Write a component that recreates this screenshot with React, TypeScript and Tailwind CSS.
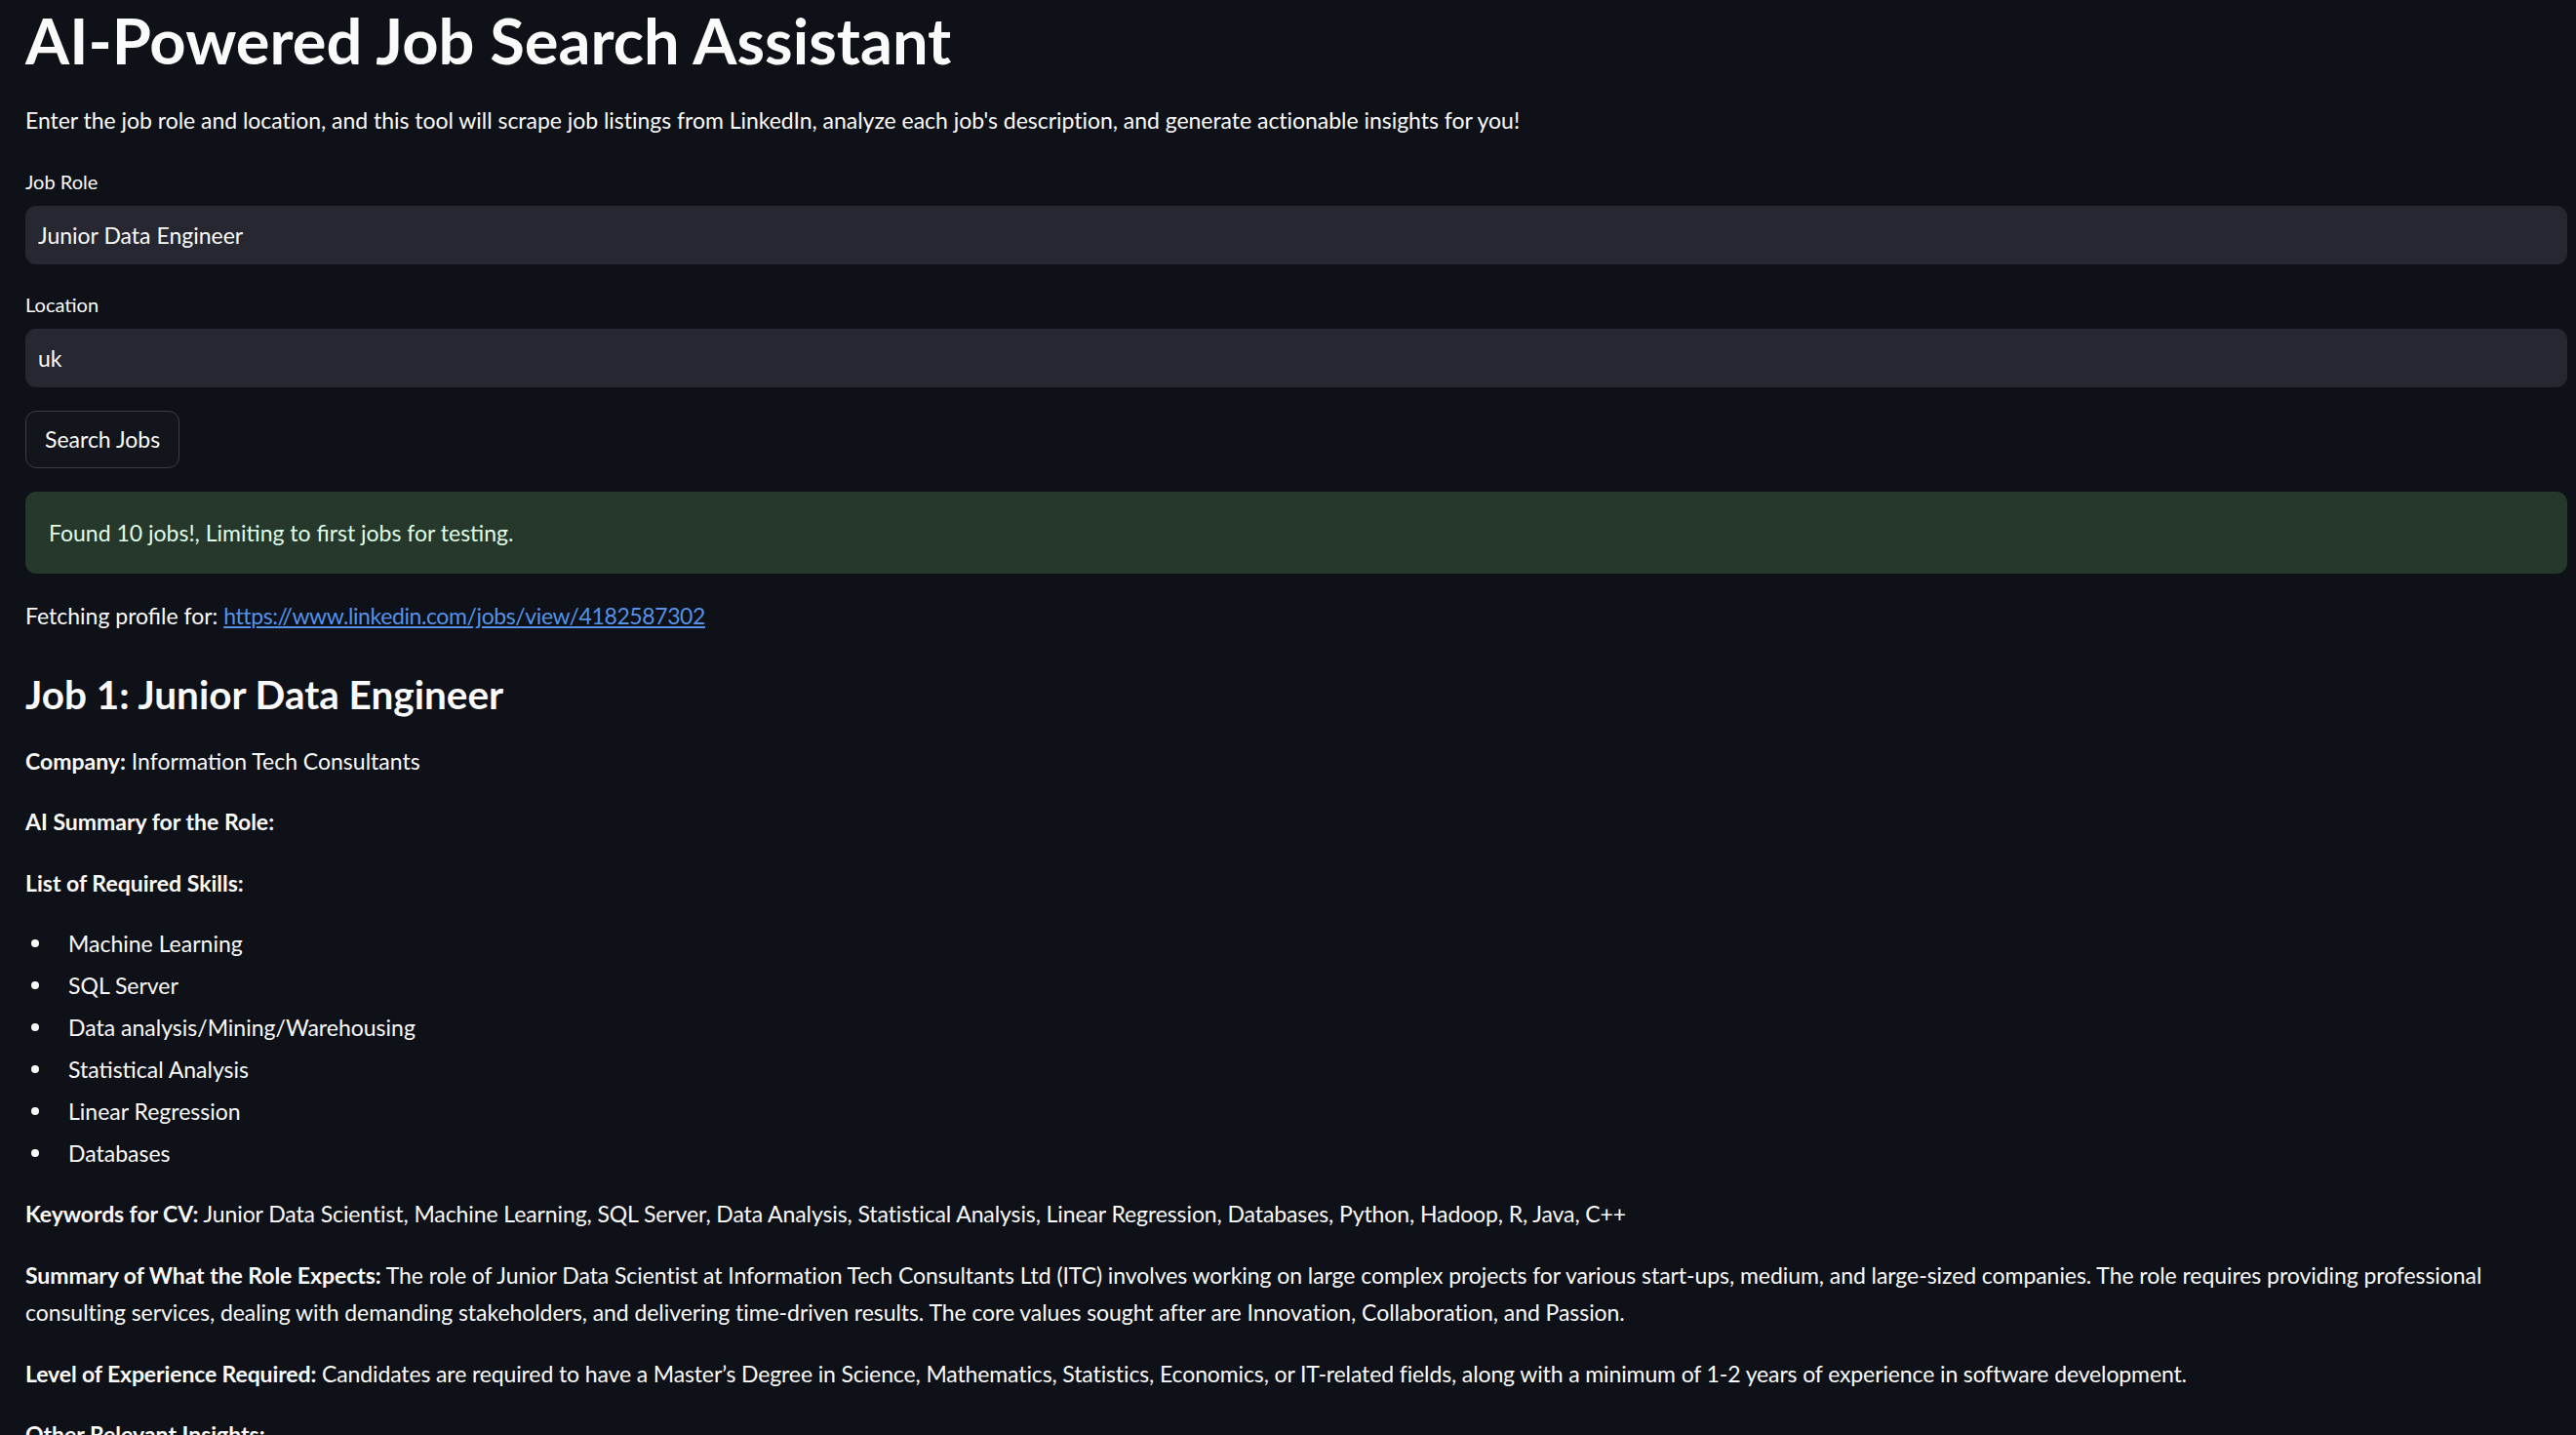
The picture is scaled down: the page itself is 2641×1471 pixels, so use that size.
import React from 'react';

const SKILLS = [
  'Machine Learning',
  'SQL Server',
  'Data analysis/Mining/Warehousing',
  'Statistical Analysis',
  'Linear Regression',
  'Databases',
];

const TextField: React.FC<{ label: string; value: string; first?: boolean }> = ({ label, value, first }) => (
  <>
    <label className={`${first ? 'mt-[29px]' : 'mt-[26px]'} block text-[20px] leading-[30px]`}>{label}</label>
    <div className="mt-[10px] flex h-[60px] items-center rounded-[11px] bg-[#262730] px-[13px]">
      <input
        readOnly
        value={value}
        className="w-full bg-transparent text-[23px] leading-[27.6px] text-[#fafafa] outline-none"
      />
    </div>
  </>
);

export default function App() {
  return (
    <div className="h-screen overflow-hidden bg-[#0e1117] pl-[26px] pr-[9px] font-['Lato',sans-serif] text-[#fafafa]">
      <div className="flex flex-col">
        <h1 className="pt-[2px] text-[65px] font-bold leading-[78px]">AI-Powered Job Search Assistant</h1>
        <p className="mt-[24px] text-[23px] leading-[38.4px] tracking-[-0.03px]">
          Enter the job role and location, and this tool will scrape job listings from LinkedIn, analyze each job's
          description, and generate actionable insights for you!
        </p>

        <TextField label="Job Role" value="Junior Data Engineer" first />
        <TextField label="Location" value="uk" />

        <div className="mt-[24px]">
          <button className="flex h-[59px] items-center rounded-[11px] border border-[#3b3d44] bg-[#12151c] px-[19px] text-[23px] leading-[27.6px]">
            Search Jobs
          </button>
        </div>

        <div className="mt-[24px] flex h-[84px] items-center rounded-[11px] bg-[#26382b] px-[24px] text-[23px] leading-[27.6px] text-[#dffde9]">
          Found 10 jobs!, Limiting to first jobs for testing.
        </div>

        <p className="mt-[24px] text-[23px] leading-[38.4px]">
          Fetching profile for:{' '}
          <a href="#" className="tracking-[-0.4px] text-[#5592e8] underline">
            https://www.linkedin.com/jobs/view/4182587302
          </a>
        </p>

        <h3 className="mt-[37.5px] text-[40.5px] font-bold leading-[48px]">Job 1: Junior Data Engineer</h3>

        <div className="mt-[24.4px] text-[23px] leading-[38.4px]">
          <p className="mb-[24px]">
            <b>Company:</b> Information Tech Consultants
          </p>
          <p className="mb-[24px]">
            <b>AI Summary for the Role:</b>
          </p>
          <p className="mb-[24px]">
            <b>List of Required Skills:</b>
          </p>
          <ul className="mb-[24px]">
            {SKILLS.map((skill) => (
              <li key={skill} className="mb-[4.6px] flex items-center">
                <span className="ml-[6px] mr-[30px] h-[8px] w-[8px] rounded-full bg-[#fafafa]" />
                {skill}
              </li>
            ))}
          </ul>
          <p className="mb-[24px] tracking-[-0.1px]">
            <b>Keywords for CV:</b> Junior Data Scientist, Machine Learning, SQL Server, Data Analysis, Statistical
            Analysis, Linear Regression, Databases, Python, Hadoop, R, Java, C++
          </p>
          <p className="mb-[24px] tracking-[-0.06px]">
            <b>Summary of What the Role Expects:</b> The role of Junior Data Scientist at Information Tech Consultants
            Ltd (ITC) involves working on large complex projects for various start-ups, medium, and large-sized
            companies. The role requires providing professional consulting services, dealing with demanding
            stakeholders, and delivering time-driven results. The core values sought after are Innovation,
            Collaboration, and Passion.
          </p>
          <p className="mb-[24px] tracking-[-0.12px]">
            <b>Level of Experience Required:</b> Candidates are required to have a Master’s Degree in Science,
            Mathematics, Statistics, Economics, or IT-related fields, along with a minimum of 1-2 years of experience in
            software development.
          </p>
          <p className="mb-[24px]">
            <b>Other Relevant Insights:</b>
          </p>
        </div>
      </div>
    </div>
  );
}
